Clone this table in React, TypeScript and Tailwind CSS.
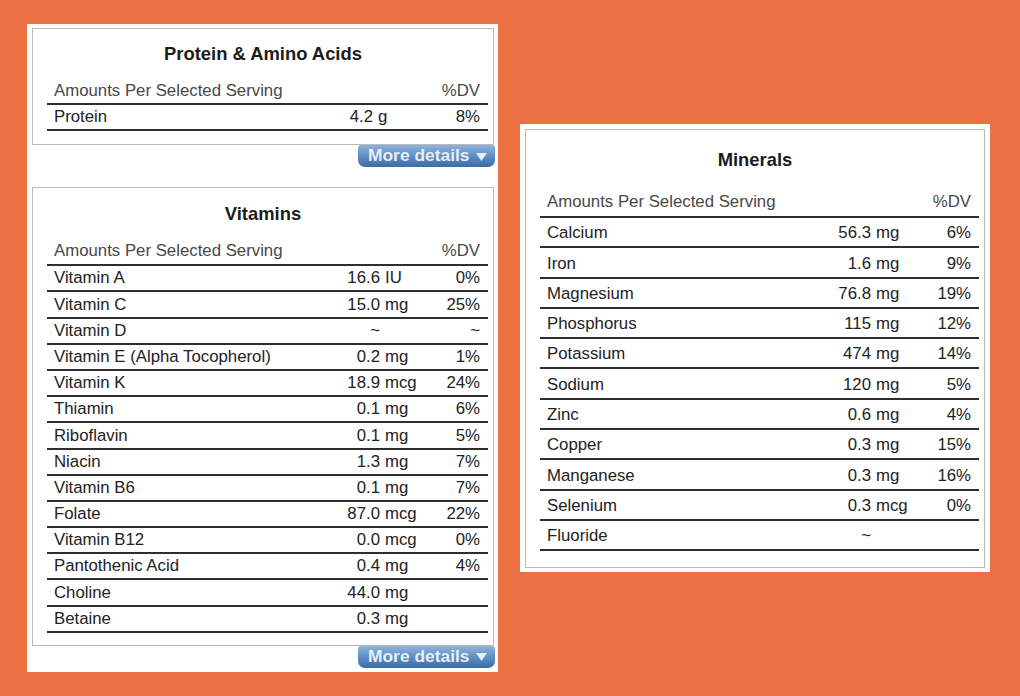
import React from "react";

type Row = { name: string; num: string; unit: string; dv: string };

const protein: Row[] = [{ name: "Protein", num: "4.2", unit: "g", dv: "8%" }];

const vitamins: Row[] = [
  { name: "Vitamin A", num: "16.6", unit: "IU", dv: "0%" },
  { name: "Vitamin C", num: "15.0", unit: "mg", dv: "25%" },
  { name: "Vitamin D", num: "~", unit: "", dv: "~" },
  { name: "Vitamin E (Alpha Tocopherol)", num: "0.2", unit: "mg", dv: "1%" },
  { name: "Vitamin K", num: "18.9", unit: "mcg", dv: "24%" },
  { name: "Thiamin", num: "0.1", unit: "mg", dv: "6%" },
  { name: "Riboflavin", num: "0.1", unit: "mg", dv: "5%" },
  { name: "Niacin", num: "1.3", unit: "mg", dv: "7%" },
  { name: "Vitamin B6", num: "0.1", unit: "mg", dv: "7%" },
  { name: "Folate", num: "87.0", unit: "mcg", dv: "22%" },
  { name: "Vitamin B12", num: "0.0", unit: "mcg", dv: "0%" },
  { name: "Pantothenic Acid", num: "0.4", unit: "mg", dv: "4%" },
  { name: "Choline", num: "44.0", unit: "mg", dv: "" },
  { name: "Betaine", num: "0.3", unit: "mg", dv: "" },
];

const minerals: Row[] = [
  { name: "Calcium", num: "56.3", unit: "mg", dv: "6%" },
  { name: "Iron", num: "1.6", unit: "mg", dv: "9%" },
  { name: "Magnesium", num: "76.8", unit: "mg", dv: "19%" },
  { name: "Phosphorus", num: "115", unit: "mg", dv: "12%" },
  { name: "Potassium", num: "474", unit: "mg", dv: "14%" },
  { name: "Sodium", num: "120", unit: "mg", dv: "5%" },
  { name: "Zinc", num: "0.6", unit: "mg", dv: "4%" },
  { name: "Copper", num: "0.3", unit: "mg", dv: "15%" },
  { name: "Manganese", num: "0.3", unit: "mg", dv: "16%" },
  { name: "Selenium", num: "0.3", unit: "mcg", dv: "0%" },
  { name: "Fluoride", num: "~", unit: "", dv: "" },
];

function DataRow({ r, tall, wideUnit }: { r: Row; tall?: boolean; wideUnit?: boolean }) {
  return (
    <div
      className={
        "flex items-center border-b-2 border-[#2e2e2e] pl-[7px] pr-[8px] leading-none text-[#222] " +
        (tall ? "h-[30.3px] pt-[3px]" : "h-[26.2px] pt-[1px]")
      }
    >
      <div className="flex-1 whitespace-nowrap">{r.name}</div>
      <div className="w-[70px] text-right whitespace-nowrap">{r.num}</div>
      <div className={(wideUnit ? "w-[59px]" : "w-[52px]") + " pl-[5px] whitespace-nowrap"}>{r.unit}</div>
      <div className="w-[48px] text-right whitespace-nowrap">{r.dv}</div>
    </div>
  );
}

function Header({ h }: { h: string }) {
  return (
    <div
      className={
        "flex items-center border-b-2 border-[#2e2e2e] pl-[7px] pr-[8px] leading-none text-[#484848] " + h
      }
    >
      <div className="flex-1">Amounts Per Selected Serving</div>
      <div>%DV</div>
    </div>
  );
}

function MoreButton() {
  return (
    <div className="flex justify-end -mr-[1px]">
      <div className="flex h-[22px] w-[137px] items-center rounded-t-[3px] rounded-b-[7px] bg-linear-to-b from-[#8fb4dd] via-[#5d8ec4] to-[#3c6ca5] pl-[10px] text-[17.4px] font-bold leading-none text-[#e6eef8]">
        <span>More details</span>
        <svg width="11" height="8" viewBox="0 0 11 8" className="ml-[7px] mt-[1px]">
          <polygon points="0,0 11,0 5.5,8" fill="#e6eef8" />
        </svg>
      </div>
    </div>
  );
}

export default function App() {
  return (
    <div
      className="flex h-[696px] w-[1020px] items-start gap-[22px] overflow-hidden bg-[#ec7143] pl-[27px] pt-[24px] text-[16.8px]"
      style={{ fontFamily: '"Liberation Sans", Arial, sans-serif' }}
    >
      {/* Left panel */}
      <div className="flex w-[471px] flex-col bg-white pb-[4px] pl-[5px] pr-[4px] pt-[4px]">
        <div className="border border-[#b9b9b9] pb-[13px]">
          <div className="flex h-[50px] items-center justify-center text-[18.4px] font-bold text-[#1c1c1c]">
            Protein &amp; Amino Acids
          </div>
          <div className="ml-[14px] mr-[5px]">
            <Header h="h-[26px] pt-[1px]" />
            {protein.map((r) => (
              <DataRow key={r.name} r={r} wideUnit />
            ))}
          </div>
        </div>
        <MoreButton />

        <div className="mt-[20px] border border-[#b9b9b9] pb-[12px]">
          <div className="flex h-[50px] items-center justify-center pt-[1px] text-[18.4px] font-bold text-[#1c1c1c]">
            Vitamins
          </div>
          <div className="ml-[14px] mr-[5px]">
            <Header h="h-[28px]" />
            {vitamins.map((r) => (
              <DataRow key={r.name} r={r} />
            ))}
          </div>
        </div>
        <MoreButton />
      </div>

      {/* Right panel */}
      <div className="mt-[100px] w-[470px] bg-white p-[5px] pb-[4px]">
        <div className="border border-[#b9b9b9] pb-[16px]">
          <div className="flex h-[58px] items-center justify-center pt-[2px] text-[18.4px] font-bold text-[#1c1c1c]">
            Minerals
          </div>
          <div className="ml-[14px] mr-[5px]">
            <Header h="h-[30px] pt-[1px]" />
            {minerals.map((r) => (
              <DataRow key={r.name} r={r} tall />
            ))}
          </div>
        </div>
      </div>
    </div>
  );
}
